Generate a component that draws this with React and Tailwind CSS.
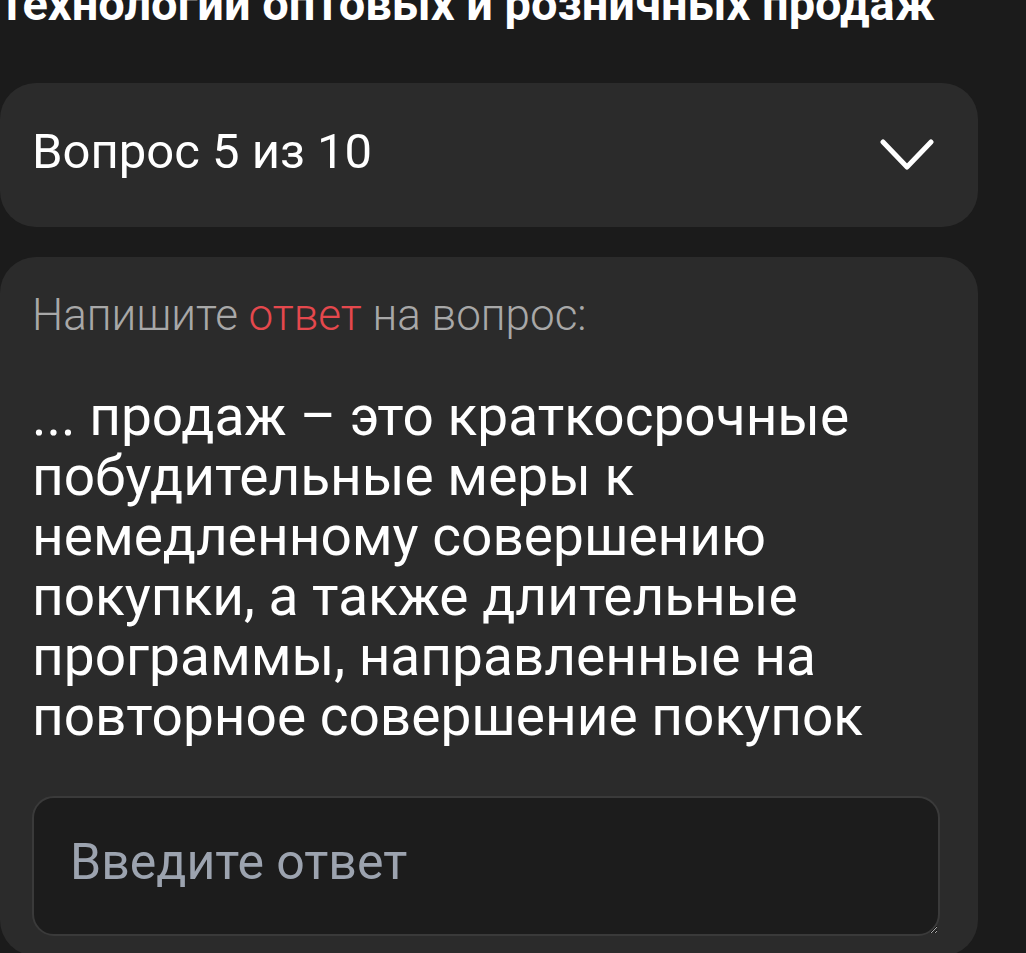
import React from 'react';

const Chevron = () => (
  <svg width="54" height="32" viewBox="0 0 54 32" fill="none">
    <path d="M3 3 L27 28 L51 3" stroke="#fff" strokeWidth="5" strokeLinecap="round" strokeLinejoin="round" />
  </svg>
);

export default function App() {
  return (
    <div className="min-h-screen bg-[#1b1b1b] overflow-hidden font-['Roboto',sans-serif]">
      <h1 className="text-[47px] font-bold text-white leading-none -mt-[20px] whitespace-nowrap">
        технологии оптовых и розничных продаж
      </h1>

      <div className="mt-[56px] w-[978px] h-[144px] rounded-[36px] bg-[#2b2b2b] flex items-center justify-between pl-8 pr-[44px]">
        <span className="text-[49px] text-white leading-none mb-[7px]">Вопрос 5 из 10</span>
        <Chevron />
      </div>

      <div className="mt-[30px] w-[978px] rounded-[36px] bg-[#2b2b2b] px-8 pt-8 pb-5">
        <p className="font-light text-[44px] leading-[1.2] text-[#a8a8a8]">
          Напишите <span className="text-[#e5484d]">ответ</span> на вопрос:
        </p>
        <p className="mt-[44px] text-[55px] leading-[60px] text-white pr-8">
          ... продаж – это краткосрочные побудительные меры к немедленному совершению покупки, а также длительные программы, направленные на повторное совершение покупок
        </p>
        <textarea
          placeholder="Введите ответ"
          className="mt-[50px] block w-[908px] h-[140px] rounded-[22px] bg-[#1c1c1c] border-2 border-[#3a3a3a] px-9 pt-[36px] text-[50px] leading-[56px] text-white placeholder:text-[#9ca3af] outline-none"
        />
      </div>
    </div>
  );
}
